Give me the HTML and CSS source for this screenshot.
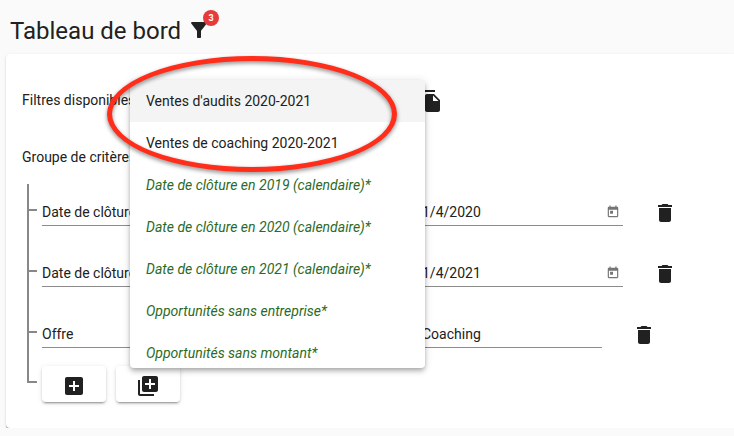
FILE: index.html
```
<!DOCTYPE html>
<html lang="fr">
<head>
    <meta charset="utf-8">
    <title>Tableau de bord</title>
    <meta name="viewport" content="width=device-width, initial-scale=1">
    <link rel="stylesheet" href="styles.css">
</head>
<body>
    <!-- shared icons -->
    <svg class="sprite" aria-hidden="true">
        <symbol id="trash" viewBox="0 0 24 24"><path d="M6 19c0 1.1.9 2 2 2h8c1.1 0 2-.9 2-2V7H6v12zM19 4h-3.500l-1-1h-5l-1 1H5v2h14V4z"/></symbol>
        <symbol id="today" viewBox="0 0 24 24"><path d="M19 3h-1V1h-2v2H8V1H6v2H5c-1.110 0-1.990.9-1.990 2L3 19c0 1.100.890 2 2 2h14c1.100 0 2-.9 2-2V5c0-1.100-.9-2-2-2zm0 16H5V8h14v11zM7 10h5v5H7z"/></symbol>
    </svg>

    <header class="header">
        <h1>Tableau de bord</h1>
        <button type="button" class="icon-btn" aria-label="Filtres">
            <svg class="icon" viewBox="0 0 24 24"><path d="M4.250 5.610C6.270 8.200 10 13 10 13v6c0 .55.45 1 1 1h2c.55 0 1-.45 1-1v-6s3.720-4.800 5.740-7.390c.51-.66.04-1.610-.79-1.610H5.040c-.83 0-1.300.95-.79 1.610z"/></svg>
            <span class="badge">3</span>
        </button>
    </header>

    <main class="card">
        <div class="filters">
            <span class="filters-label" id="filters-label">Filtres disponibles</span>
            <button type="button" class="icon-btn" aria-label="Copier">
                <svg class="icon" viewBox="0 0 24 24"><path d="M16 1H4c-1.100 0-2 .9-2 2v14h2V3h12V1zm-1 4l6 6v10c0 1.100-.9 2-2 2H7.990C6.890 23 6 22.100 6 21V7c0-1.100.890-2 1.990-2h7zm-1 7h5.500L14 6.500V12z"/></svg>
            </button>

            <ul class="menu" role="listbox" aria-labelledby="filters-label">
                <li class="option active" role="option" aria-selected="true">Ventes d'audits 2020-2021</li>
                <li class="option" role="option">Ventes de coaching 2020-2021</li>
                <li class="option preset" role="option">Date de clôture en 2019 (calendaire)*</li>
                <li class="option preset" role="option">Date de clôture en 2020 (calendaire)*</li>
                <li class="option preset" role="option">Date de clôture en 2021 (calendaire)*</li>
                <li class="option preset" role="option">Opportunités sans entreprise*</li>
                <li class="option preset" role="option">Opportunités sans montant*</li>
            </ul>
            <div class="highlight"></div>
        </div>

        <h2>Groupe de critères</h2>

        <div class="tree">
            <div class="bracket"></div>
            <div class="rows">
                <div class="row">
                    <input class="field criterion" type="text" value="Date de clôture" aria-label="Critère 1">
                    <div class="field date">
                        <input type="text" value="1/4/2020" aria-label="Date 1">
                        <button type="button" class="icon-btn" aria-label="Calendrier"><svg class="icon-small"><use href="#today"/></svg></button>
                    </div>
                    <button type="button" class="icon-btn delete" aria-label="Supprimer"><svg class="icon"><use href="#trash"/></svg></button>
                </div>
                <div class="row">
                    <input class="field criterion" type="text" value="Date de clôture" aria-label="Critère 2">
                    <div class="field date">
                        <input type="text" value="1/4/2021" aria-label="Date 2">
                        <button type="button" class="icon-btn" aria-label="Calendrier"><svg class="icon-small"><use href="#today"/></svg></button>
                    </div>
                    <button type="button" class="icon-btn delete" aria-label="Supprimer"><svg class="icon"><use href="#trash"/></svg></button>
                </div>
                <div class="row">
                    <input class="field criterion" type="text" value="Offre" aria-label="Critère 3">
                    <input class="field value" type="text" value="Coaching" aria-label="Valeur 3">
                    <button type="button" class="icon-btn delete" aria-label="Supprimer"><svg class="icon"><use href="#trash"/></svg></button>
                </div>
                <div class="actions">
                    <button type="button" class="btn" aria-label="Ajouter un critère">
                        <svg class="icon" viewBox="0 0 24 24"><path d="M19 3H5c-1.110 0-2 .9-2 2v14c0 1.100.890 2 2 2h14c1.100 0 2-.9 2-2V5c0-1.100-.9-2-2-2zm-2 10h-4v4h-2v-4H7v-2h4V7h2v4h4v2z"/></svg>
                    </button>
                    <button type="button" class="btn" aria-label="Ajouter un groupe">
                        <svg class="icon" viewBox="0 0 24 24"><path d="M4 6H2v14c0 1.100.9 2 2 2h14v-2H4V6zm16-4H8c-1.100 0-2 .9-2 2v12c0 1.100.9 2 2 2h12c1.100 0 2-.9 2-2V4c0-1.100-.9-2-2-2zm-1 9h-4v4h-2v-4H9V9h4V5h2v4h4v2z"/></svg>
                    </button>
                </div>
            </div>
        </div>
    </main>
</body>
</html>
```
FILE: styles.css
```
* {
    box-sizing: border-box;
}
body {
    margin: 0;
    background: #fafafa;
    color: #212121;
    font: 14px/24px Roboto, sans-serif;
}
h1, h2, ul {
    margin: 0;
    padding: 0;
    font-weight: 400;
}
button, input {
    padding: 0;
    border: 0;
    background: none;
    color: inherit;
    font: inherit;
}
.sprite {
    display: none;
}
.icon {
    display: block;
    width: 24px;
    height: 24px;
    fill: #212121;
}
.icon-small {
    display: block;
    width: 14px;
    height: 14px;
    fill: #757575;
}
.icon-btn {
    position: relative;
    flex: none;
    cursor: pointer;
}

.header {
    display: flex;
    align-items: center;
    gap: 6px;
    padding: 12px 10px 6px;
}
.header h1 {
    padding-top: 2px;
    font-size: 24px;
    line-height: 34px;
}
.badge {
    position: absolute;
    top: -8px;
    left: 16px;
    width: 16px;
    height: 16px;
    border-radius: 50%;
    background: #e53b3e;
    color: #fff;
    font-size: 9px;
    font-weight: 700;
    line-height: 16px;
    text-align: center;
}

.card {
    margin-left: 6px;
    padding: 28px 16px 26px;
    border-radius: 4px 0 0 4px;
    background: #fff;
    box-shadow: 0 1px 0 rgba(0,0,0,.25), 0 1px 1px rgba(0,0,0,.14), 0 1px 3px rgba(0,0,0,.12);
}
.filters {
    position: relative;
    display: flex;
    align-items: center;
    height: 38px;
}
.filters-label {
    align-self: flex-start;
    width: 397px;
    line-height: 36px;
}
.menu {
    position: absolute;
    z-index: 1;
    top: -2px;
    left: 108px;
    width: 295px;
    height: 288px;
    overflow: hidden;
    border-radius: 4px;
    background: #fff;
    box-shadow: 0 2px 4px -1px rgba(0,0,0,.2), 0 4px 5px rgba(0,0,0,.14), 0 1px 10px rgba(0,0,0,.12);
    list-style: none;
}
.option {
    padding: 0 16px;
    line-height: 42px;
    cursor: pointer;
}
.option.active {
    background: #f4f4f4;
}
.option.preset {
    color: #2c6b1f;
    font-style: italic;
}
.highlight {
    position: absolute;
    z-index: 2;
    top: -26px;
    left: 85px;
    width: 290px;
    height: 116px;
    border: 5px solid #ff2d1a;
    border-radius: 50%;
    filter: drop-shadow(0 2px 2px rgba(0,0,0,.45));
    pointer-events: none;
}

h2 {
    margin: 25px 0 15px;
    font-size: 14px;
}
.tree {
    display: flex;
    padding-left: 5px;
}
.bracket {
    width: 10px;
    margin-bottom: 19px;
    border: solid #888;
    border-width: 0 0 2px 2px;
}
.rows {
    flex: 1;
    margin-left: -8px;
    padding-top: 16px;
}
.row {
    display: flex;
    margin-bottom: 35px;
}
.row:nth-child(3) {
    margin-bottom: 18px;
}
.row::before {
    content: "";
    width: 8px;
    height: 2px;
    margin: 9px 5px 0 0;
    background: #888;
}
.field {
    height: 26px;
    padding-bottom: 1px;
    border-bottom: 1px solid #8c8c8c;
}
.criterion {
    width: 370px;
    margin-right: 10px;
}
.date {
    display: flex;
    align-items: center;
    width: 201px;
    padding-right: 3px;
}
.date input {
    flex: 1;
    min-width: 0;
}
.value {
    width: 180px;
}
.delete {
    margin-left: 30px;
}
.actions {
    display: flex;
    gap: 10px;
    padding-left: 13px;
}
.btn {
    display: flex;
    justify-content: center;
    width: 64px;
    height: 36px;
    padding-top: 8px;
    border-radius: 4px;
    background: #fff;
    box-shadow: 0 3px 1px -2px rgba(0,0,0,.2), 0 2px 2px rgba(0,0,0,.14), 0 1px 5px rgba(0,0,0,.12);
    cursor: pointer;
}
```
